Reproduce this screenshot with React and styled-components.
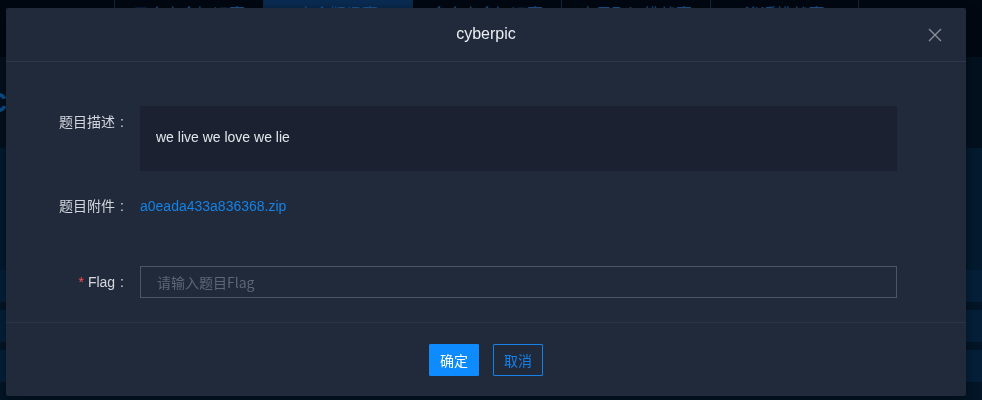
import React from 'react';
import styled, { createGlobalStyle } from 'styled-components';

const GlobalStyle = createGlobalStyle`
  html, body {
    margin: 0;
    padding: 0;
    background: #020a14;
    font-family: "Liberation Sans", "Noto Sans CJK SC", Arial, sans-serif;
    overflow: hidden;
  }
`;

const tabs = ['三个安全知识赛', '安全靶场赛', '全个安全知识赛', '电子取证挑战赛', '渗透挑战赛'];

export default function App() {
  return (
    <>
      <GlobalStyle />
      <Page>
        <TopNav>
          {tabs.map((t, i) => (
            <Tab key={t} active={i === 1}>{t}</Tab>
          ))}
        </TopNav>
        <SectionHead>
          <SectionTitle>C</SectionTitle>
        </SectionHead>
        <Table>
          <TableHead />
          <TableRow />
          <TableRow />
          <TableRow />
        </Table>
      </Page>

      <Modal>
        <ModalHeader>
          <ModalTitle>cyberpic</ModalTitle>
          <CloseButton aria-label="close">
            <svg width="14" height="14" viewBox="0 0 14 14">
              <path d="M1 1 L13 13 M13 1 L1 13" stroke="#8b919b" strokeWidth="1.3" fill="none" />
            </svg>
          </CloseButton>
        </ModalHeader>

        <ModalBody>
          <FormRow gap={19}>
            <Label>题目描述</Label>
            <Description>we live we love we lie</Description>
          </FormRow>
          <FormRow gap={44}>
            <Label>题目附件</Label>
            <FileLink href="#">a0eada433a836368.zip</FileLink>
          </FormRow>
          <FormRow gap={0}>
            <Label><Required>*</Required>Flag</Label>
            <FlagInput placeholder="请输入题目Flag" />
          </FormRow>
        </ModalBody>

        <ModalFooter>
          <PrimaryButton>确定</PrimaryButton>
          <GhostButton>取消</GhostButton>
        </ModalFooter>
      </Modal>
    </>
  );
}

/* background page (dimmed behind the dialog) */
const Page = styled.div`
  height: 400px;
  display: flex;
  flex-direction: column;
`;

const TopNav = styled.nav`
  height: 57px;
  display: flex;
  padding-left: 114px;
  background: #010811;
  overflow: hidden;
`;

const Tab = styled.div`
  flex: 0 0 149px;
  box-sizing: border-box;
  border-left: 1px solid #12263c;
  background: ${p => (p.active ? 'linear-gradient(180deg, #0a2c52 0%, #051a33 60%, #030f1f 100%)' : 'transparent')};
  color: #1d5188;
  font-family: "Noto Sans CJK SC", sans-serif;
  font-size: 16px;
  line-height: 20px;
  padding-top: 3px;
  text-align: center;
  white-space: nowrap;
  overflow: hidden;
  &:last-child {
    border-right: 1px solid #12263c;
  }
`;

const SectionHead = styled.div`
  height: 91px;
  background: #03101e;
  display: flex;
  align-items: center;
  overflow: hidden;
`;

const SectionTitle = styled.h2`
  margin: 0 0 0 -13px;
  font-size: 28px;
  font-weight: bold;
  color: #0b4f8e;
`;

const Table = styled.div`
  flex: 1;
  background: #031526;
  display: flex;
  flex-direction: column;
`;

const TableHead = styled.div`
  height: 122px;
  background: #031a2f;
`;

const TableRow = styled.div`
  height: 32px;
  margin-bottom: 8px;
  background: #051f38;
`;

/* dialog */
const Modal = styled.div`
  position: fixed;
  left: 6px;
  top: 8px;
  width: 960px;
  height: 388px;
  background: #212a3a;
  border-radius: 2px;
  display: flex;
  flex-direction: column;
  box-shadow: 0 4px 12px rgba(0, 0, 0, 0.4);
`;

const ModalHeader = styled.div`
  height: 53px;
  border-bottom: 1px solid #2f3848;
  display: flex;
  align-items: center;
  justify-content: center;
  position: relative;
`;

const ModalTitle = styled.div`
  color: #eceef1;
  font-size: 16px;
  margin-top: -2px;
`;

const CloseButton = styled.button`
  position: absolute;
  right: 23px;
  top: 19px;
  width: 16px;
  height: 16px;
  padding: 0;
  border: 0;
  background: none;
  display: flex;
  align-items: center;
  justify-content: center;
`;

const ModalBody = styled.div`
  padding: 44px 69px 24px 0;
  border-bottom: 1px solid #2b3444;
  display: flex;
  flex-direction: column;
`;

const FormRow = styled.div`
  display: grid;
  grid-template-columns: 134px 1fr;
  align-items: start;
  margin-bottom: ${p => p.gap}px;
`;

const Label = styled.div`
  font-family: "Liberation Sans", "Noto Sans CJK SC", sans-serif;
  color: #d3d7dd;
  font-size: 14px;
  line-height: 32px;
  text-align: right;
  padding-right: 16px;
  &::after {
    content: ':';
    margin-left: 5px;
  }
`;

const Required = styled.span`
  color: #ff4d4f;
  margin-right: 4px;
`;

const Description = styled.div`
  background: #1b2131;
  height: 65px;
  line-height: 62px;
  padding: 0 16px;
  color: #e3e6ea;
  font-size: 14px;
`;

const FileLink = styled.a`
  color: #1482e6;
  font-size: 14px;
  line-height: 32px;
  text-decoration: none;
`;

const FlagInput = styled.input`
  height: 32px;
  box-sizing: border-box;
  border: 1px solid #4d5666;
  background: transparent;
  padding: 0 16px;
  color: #e3e6ea;
  font-size: 14px;
  font-family: "Noto Sans CJK SC", sans-serif;
  outline: none;
  &::placeholder {
    color: #5d6676;
  }
`;

const ModalFooter = styled.div`
  flex: 1;
  display: flex;
  justify-content: center;
  align-items: flex-start;
  gap: 14px;
  padding-top: 21px;
`;

const ButtonBase = styled.button`
  width: 50px;
  height: 32px;
  box-sizing: border-box;
  font-family: "Noto Sans CJK SC", sans-serif;
  font-size: 14px;
  border-radius: 1px;
  padding: 0;
  cursor: pointer;
`;

const PrimaryButton = styled(ButtonBase)`
  background: #0e8cff;
  border: 1px solid #0e8cff;
  color: #ffffff;
`;

const GhostButton = styled(ButtonBase)`
  background: transparent;
  border: 1px solid #1480e8;
  color: #1480e8;
`;
